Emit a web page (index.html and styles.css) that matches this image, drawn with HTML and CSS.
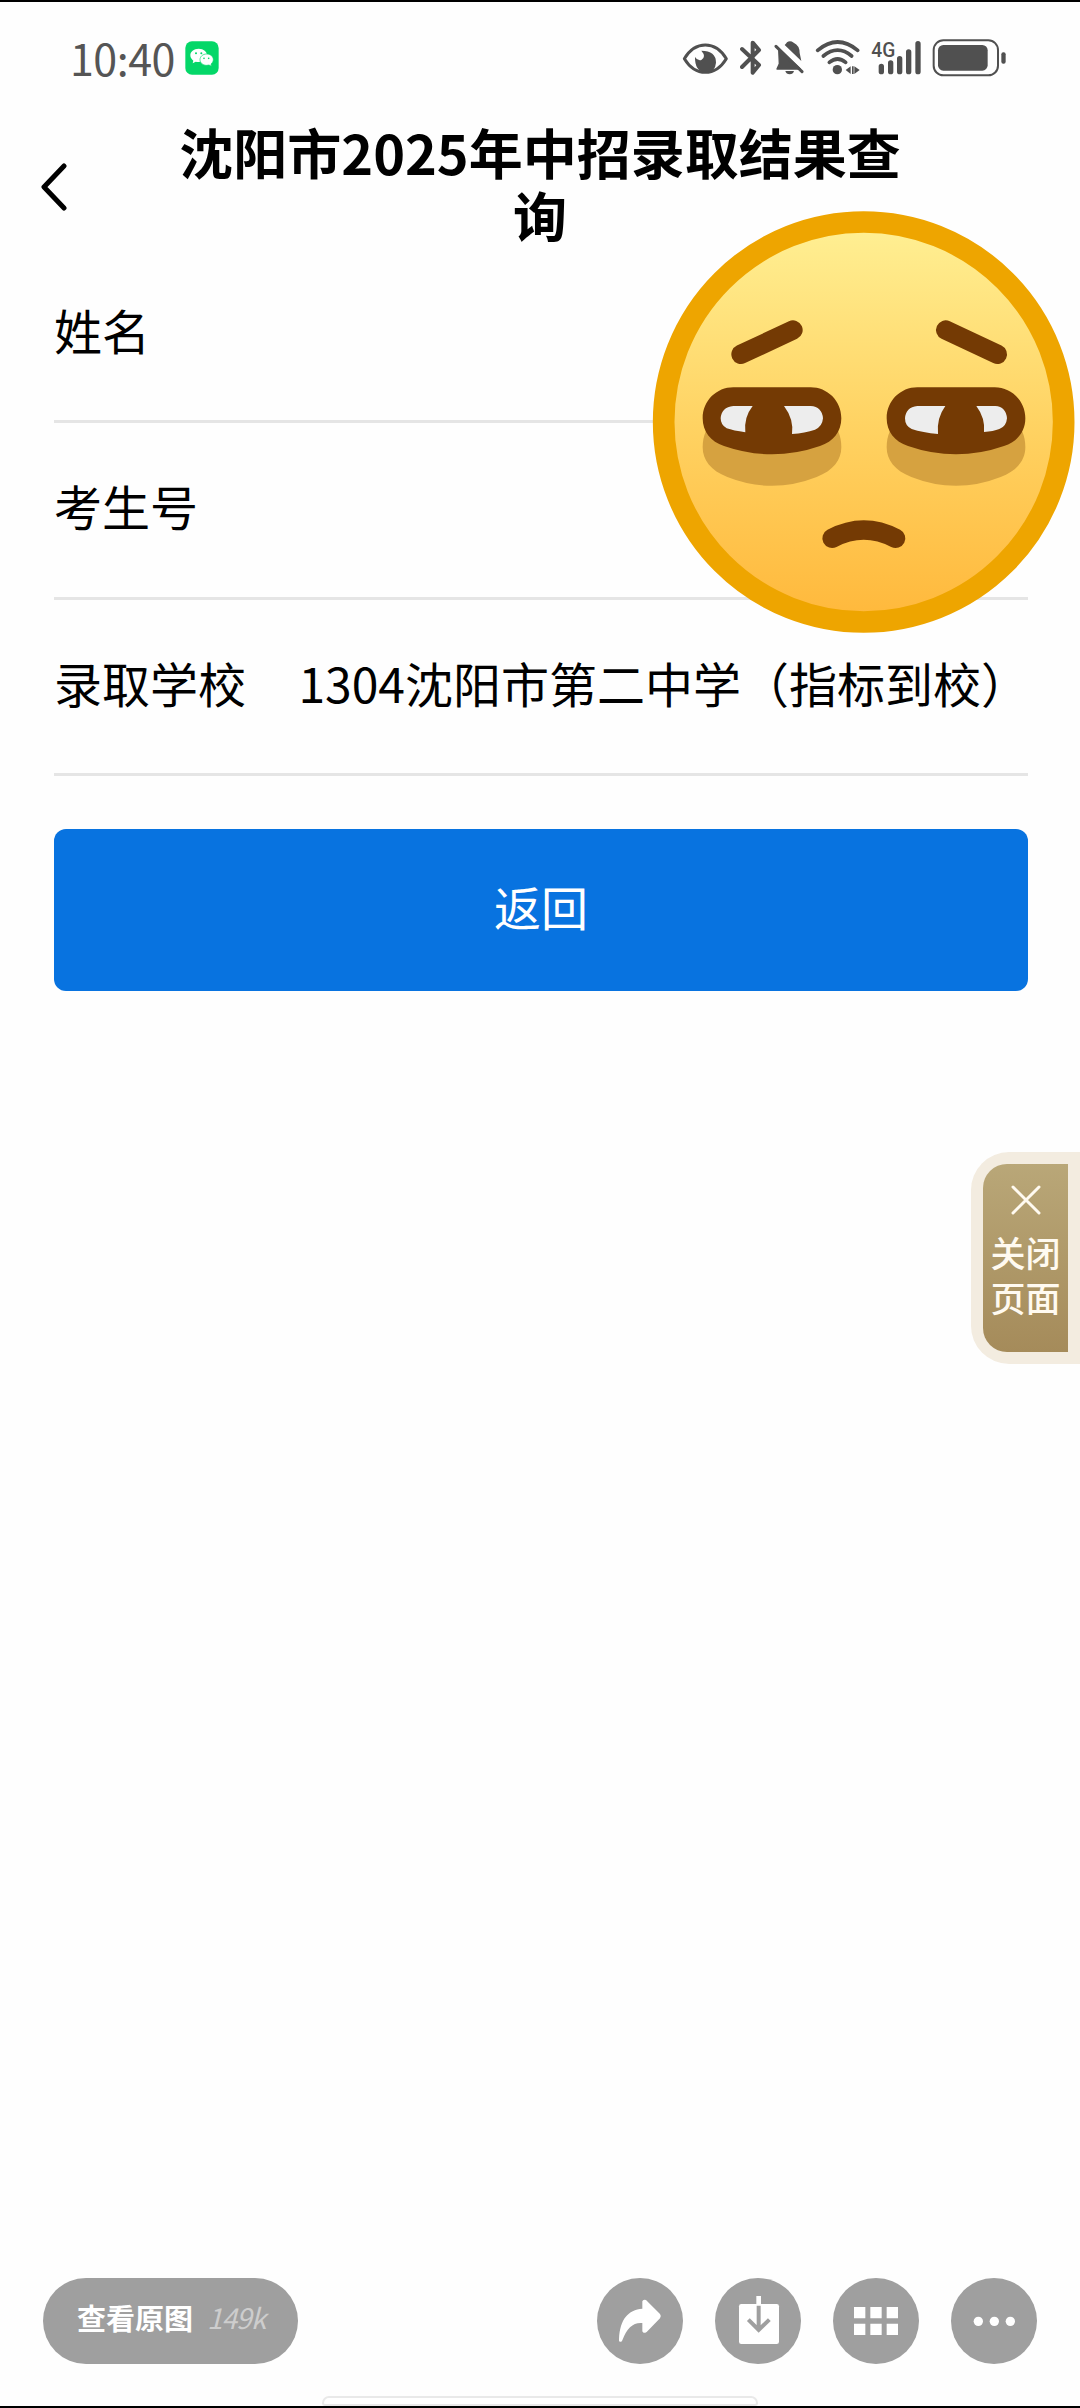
FILE: index.html
```html
<!DOCTYPE html>
<html lang="zh-CN">
<head>
    <meta charset="UTF-8">
    <meta name="viewport" content="width=device-width, initial-scale=1.0">
    <title>沈阳市2025年中招录取结果查询</title>
    <link rel="stylesheet" href="styles.css">
</head>
<body>
    <div class="screen">
        <div class="status-bar">
            <span class="time">10:40</span>
            <svg class="wechat" width="34" height="34" viewBox="0 0 102 102">
                <rect x="1" y="1" width="100" height="100" rx="20" fill="#04d768"/>
                <path d="M41 23c-15 0-25 9-25 20 0 7 4 12 9 16l-2 8 9-5c3 1 6 1 9 1 15 0 25-9 25-20s-10-20-25-20z" fill="#fff"/>
                <path d="M65 39c-12 0-20 8-20 17s8 17 20 17l7-1 8 4-2-7c4-3 7-8 7-13 0-9-8-17-20-17z" fill="#fff" stroke="#04d768" stroke-width="2"/>
                <g fill="#04d768">
                    <circle cx="33" cy="37" r="3"/><circle cx="49" cy="37" r="3"/>
                    <circle cx="57" cy="52" r="2.5"/><circle cx="71" cy="52" r="2.5"/>
                </g>
            </svg>
            <div class="status-icons">
                <svg class="eye" width="47" height="34" viewBox="66 63 141 102">
                    <path d="M73 116Q98 75 136 75Q174 75 199 116Q174 157 136 157Q98 157 73 116Z" fill="none" stroke="#505050" stroke-width="9" stroke-linejoin="round"/>
                    <path d="M124 92Q168 92 168 128Q166 157 136 157Q104 154 105 111Q112 123 124 120Q140 110 124 92Z" fill="#505050"/>
                </svg>
                <svg class="bluetooth" width="22" height="36" viewBox="240 62 66 108">
                    <path d="M246 89L297 137L278 160V70L297 92L246 143" fill="none" stroke="#505050" stroke-width="12" stroke-linecap="round" stroke-linejoin="round"/>
                </svg>
                <svg class="bell" width="31" height="36" viewBox="340 62 93 108">
                    <path d="M357 88L422 149H352L359 133Z" fill="#505050" stroke="#505050" stroke-width="4" stroke-linejoin="round"/>
                    <path d="M375 77Q380 73 382 69Q391 62 402 70Q420 78 420 101L425 125Z" fill="#505050"/>
                    <path d="M349 81L427 157" stroke="#505050" stroke-width="9" stroke-linecap="round"/>
                    <path d="M377 155H403Q400 165 390 165Q380 165 377 155Z" fill="#505050"/>
                </svg>
                <svg class="wifi" width="45" height="36" viewBox="466 61 135 108">
                    <g fill="none" stroke="#505050" stroke-width="11" stroke-linecap="round">
                        <path d="M474 92Q534 42 594 92"/>
                        <path d="M491 109Q534 74 576 109"/>
                        <path d="M509 128Q534 108 558 128"/>
                    </g>
                    <circle cx="533" cy="150" r="14" fill="#505050"/>
                    <path d="M558 151L573 140V163ZM577 140H582V163H577ZM584 140L600 151L584 163Z" fill="#505050"/>
                </svg>
                <svg class="signal" width="50" height="36" viewBox="635 60 150 108">
                    <text class="network" x="636" y="110" textLength="72" lengthAdjust="spacingAndGlyphs">4G</text>
                    <g stroke="#505050" stroke-width="16" stroke-linecap="round">
                        <path d="M666 139V155M694 129V155M721 116V155M748 96V155M776 71V155"/>
                    </g>
                </svg>
                <svg class="battery" width="75" height="38" viewBox="818 56 225 114">
                    <rect x="823" y="60" width="193" height="105" rx="29" fill="none" stroke="#505050" stroke-width="6"/>
                    <rect x="836" y="74" width="149" height="77" rx="16" fill="#505050"/>
                    <rect x="1026" y="96" width="13" height="34" rx="6" fill="#505050"/>
                </svg>
            </div>
        </div>

        <div class="title-bar">
            <svg class="back" width="28" height="48" viewBox="0 0 28 48">
                <path d="M24 3L4 24L24 45" fill="none" stroke="#000" stroke-width="5" stroke-linecap="round" stroke-linejoin="round"/>
            </svg>
            <h1>沈阳市2025年中招录取结果查询</h1>
        </div>

        <div class="content">
            <div class="row">
                <span class="label">姓名</span>
            </div>
            <div class="row">
                <span class="label">考生号</span>
            </div>
            <div class="row">
                <span class="label">录取学校</span>
                <span class="value">1304沈阳市第二中学（指标到校）</span>
            </div>
            <button type="button" class="return">返回</button>
        </div>

        <svg class="face" width="440" height="440" viewBox="0 0 1320 1320">
            <defs>
                <linearGradient id="skin" x1="0" y1="0" x2="0" y2="1">
                    <stop offset="0" stop-color="#fff094"/>
                    <stop offset="0.5" stop-color="#ffd363"/>
                    <stop offset="1" stop-color="#ffb83b"/>
                </linearGradient>
            </defs>
            <circle cx="671" cy="666" r="600" fill="url(#skin)"/>
            <circle cx="671" cy="666" r="600" fill="none" stroke="#eea500" stroke-width="65"/>
            <g fill="none" stroke="#743a04" stroke-width="58" stroke-linecap="round">
                <path d="M303 463L459 390"/>
                <path d="M917 390L1072 463"/>
                <path d="M576 1015Q671 965 767 1015"/>
            </g>
            <path d="M197 695H595Q604 715 604 742C604 780 580 812 530 831Q396 884 262 831C212 812 188 780 188 742Q188 715 197 695Z" fill="#d6a240"/>
            <path d="M749 695H1147Q1156 715 1156 742C1156 780 1132 812 1082 831Q948 884 814 831C764 812 740 780 740 742Q740 715 749 695Z" fill="#d6a240"/>
            <path d="M280 562H512C562 562 604 602 604 655C604 695 580 725 540 738Q396 788 252 738C212 725 188 695 188 655C188 602 230 562 280 562Z" fill="#743a04"/>
            <path d="M832 562H1064C1114 562 1156 602 1156 655C1156 695 1132 725 1092 738Q948 788 804 738C764 725 740 695 740 655C740 602 782 562 832 562Z" fill="#743a04"/>
            <g fill="#ededed">
                <path d="M280 618H338Q311 652 316 697Q280 692 260 685Q242 675 242 655Q244 622 280 618Z"/>
                <path d="M432 618H512Q546 620 549 655Q547 680 525 689Q495 699 456 702Q462 658 432 618Z"/>
                <path d="M832 618H916Q889 655 894 702Q848 698 815 687Q795 678 795 655Q797 622 832 618Z"/>
                <path d="M1009 618H1066Q1098 620 1101 655Q1099 680 1078 687Q1060 694 1032 696Q1036 654 1009 618Z"/>
            </g>
        </svg>

        <div class="close-tab">
            <div class="close-inner">
                <svg width="30" height="30" viewBox="0 0 30 30">
                    <path d="M2 2L28 28M28 2L2 28" stroke="#fffaf0" stroke-width="3" stroke-linecap="round"/>
                </svg>
                <span>关闭<br>页面</span>
            </div>
        </div>

        <div class="toolbar">
            <div class="original">
                <span>查看原图</span>
                <span class="size">149k</span>
            </div>
            <div class="tool">
                <svg width="86" height="86" viewBox="81 84 258 258">
                    <path d="M217 154Q219 147 228 150L270 192Q275 198 270 205L230 246Q220 252 217 244V219Q177 215 157 271Q155 277 149 275Q146 274 147 267C150 207 174 180 217 176Z" fill="#fff"/>
                </svg>
            </div>
            <div class="tool">
                <svg width="86" height="86" viewBox="435 84 258 258">
                    <rect x="507" y="162" width="120" height="120" rx="7" fill="#fff"/>
                    <path d="M559 138H573V166H559Z" fill="#fff"/>
                    <path d="M566 167V240M535 209L566 240L598 209" fill="none" stroke="#9f9f9f" stroke-width="12"/>
                </svg>
            </div>
            <div class="tool">
                <svg width="86" height="86" viewBox="789 84 258 258">
                    <path d="M852 171h34v34h-34zM901 171h34v34h-34zM950 171h34v34h-34zM852 221h34v34h-34zM901 221h34v34h-34zM950 221h34v34h-34z" fill="#fff"/>
                </svg>
            </div>
            <div class="tool">
                <svg width="86" height="86" viewBox="1143 84 258 258">
                    <g fill="#fff">
                        <circle cx="1225" cy="214" r="14"/>
                        <circle cx="1273" cy="214" r="14"/>
                        <circle cx="1321" cy="214" r="14"/>
                    </g>
                </svg>
            </div>
        </div>
        <div class="home-handle"></div>
    </div>
</body>
</html>
```

FILE: styles.css
```css
* {
    box-sizing: border-box;
}
body {
    margin: 0;
    background-color: #fefefe;
    color: #000;
    font-family: "Noto Sans CJK SC", sans-serif;
}
svg {
    display: block;
    flex-shrink: 0;
}
.screen {
    position: relative;
    display: flex;
    flex-direction: column;
    width: 1080px;
    height: 2408px;
    border-top: 2px solid #000;
    border-bottom: 2px solid #000;
    overflow: hidden;
}
.status-bar {
    display: flex;
    align-items: center;
    height: 112px;
    padding: 0 73px 0 70px;
}
.time {
    width: 115px;
    padding-bottom: 2px;
    font-size: 43px;
    line-height: 60px;
    letter-spacing: -0.5px;
    color: #555;
    white-space: nowrap;
}
.status-icons {
    display: flex;
    align-items: center;
    margin-left: auto;
}
.bluetooth {
    margin-left: 11px;
}
.bell {
    margin-left: 11px;
}
.wifi {
    margin-left: 11px;
}
.signal {
    margin-left: 11px;
    overflow: visible;
}
.battery {
    margin-left: 11px;
}
.network {
    font-family: Roboto, sans-serif;
    font-size: 62px;
    font-weight: 500;
    fill: #505050;
}
.title-bar {
    display: flex;
    align-items: center;
    height: 146px;
    padding-left: 40px;
}
h1 {
    width: 730px;
    margin: 0 0 0 107px;
    padding-bottom: 8px;
    font-size: 54px;
    line-height: 63px;
    font-weight: 700;
    text-align: center;
    word-break: break-all;
}
.content {
    display: flex;
    flex-direction: column;
    padding: 0 52px 0 54px;
}
.row {
    display: flex;
    justify-content: space-between;
    height: 176.5px;
    padding-top: 33px;
    border-bottom: 3px solid #e5e5e5;
    font-size: 48px;
    line-height: 72px;
    white-space: nowrap;
}
.row:first-child {
    height: 163px;
}
.row + .row {
    padding-top: 46px;
}
.value {
    margin-right: -1px;
}
.return {
    height: 162px;
    margin-top: 53px;
    padding: 0 0 9px;
    border: none;
    border-radius: 12px;
    background-color: #0873e0;
    color: #fff;
    font-family: inherit;
    font-size: 47px;
}
/* lies over the name and number values */
.face {
    position: absolute;
    left: 640px;
    top: 198px;
}
.close-tab {
    position: absolute;
    right: 0;
    top: 1150px;
    width: 109px;
    height: 212px;
    padding: 12px;
    border-radius: 38px 0 0 38px;
    background-color: #f3ece0;
}
.close-inner {
    display: flex;
    flex-direction: column;
    align-items: center;
    height: 188px;
    padding-top: 21px;
    border-radius: 24px 0 0 24px;
    background: linear-gradient(#b9a778, #a58b5a);
    color: #fffaf0;
    font-size: 35px;
    font-weight: 500;
    line-height: 45px;
}
.close-inner span {
    margin-top: 14px;
}
.toolbar {
    display: flex;
    align-items: center;
    gap: 32px;
    margin-top: auto;
    padding: 0 43px 32px;
}
.original {
    display: flex;
    align-items: center;
    width: 255px;
    height: 86px;
    margin-right: auto;
    padding: 0 0 8px 34px;
    border-radius: 43px;
    background-color: #9f9f9f;
    color: #fff;
    font-size: 29px;
    font-weight: 700;
}
.size {
    margin-left: 14px;
    color: #cdcdcd;
    font-size: 28px;
    font-weight: 400;
    font-style: italic;
    letter-spacing: -1px;
}
.tool {
    width: 86px;
    height: 86px;
    border-radius: 50%;
    background-color: #9f9f9f;
}
.home-handle {
    align-self: center;
    width: 436px;
    height: 10px;
    border: 2px solid #e9e9e9;
    border-radius: 7px 7px 3px 3px;
    background-color: #fff;
}
```
